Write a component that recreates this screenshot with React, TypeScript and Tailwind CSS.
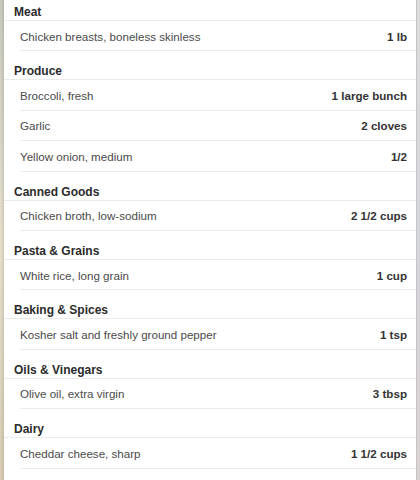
const sections = [
  { name: 'Meat', items: [['Chicken breasts, boneless skinless', '1 lb']] },
  {
    name: 'Produce',
    items: [
      ['Broccoli, fresh', '1 large bunch'],
      ['Garlic', '2 cloves'],
      ['Yellow onion, medium', '1/2'],
    ],
  },
  { name: 'Canned Goods', items: [['Chicken broth, low-sodium', '2 1/2 cups']] },
  { name: 'Pasta & Grains', items: [['White rice, long grain', '1 cup']] },
  { name: 'Baking & Spices', items: [['Kosher salt and freshly ground pepper', '1 tsp']] },
  { name: 'Oils & Vinegars', items: [['Olive oil, extra virgin', '3 tbsp']] },
  { name: 'Dairy', items: [['Cheddar cheese, sharp', '1 1/2 cups']] },
];

export default function App() {
  return (
    <div
      className="flex w-[420px] h-[480px] overflow-hidden bg-white"
      style={{ fontFamily: '"Liberation Sans", Arial, sans-serif' }}
    >
      {/* blurred photo peeking out on the left */}
      <div className="w-[4px] shrink-0 bg-gradient-to-b from-[#c9cbbf] via-[#e8e0cc] to-[#d9cdb4]" />

      <div className="flex-1 flex flex-col bg-white shadow-[-1px_0_3px_rgba(0,0,0,0.15)] text-[11.6px]">
        {sections.map((s, i) => (
          <div key={s.name}>
            <div
              className={`flex items-end pl-[10px] pb-0 border-b border-[#ebebeb] font-bold text-[12px] text-[#2b2b2b] leading-[15px] ${
                i === 0 ? 'h-[21px]' : 'h-[29px]'
              }`}
            >
              {s.name}
            </div>
            {s.items.map(([label, qty]) => (
              <div
                key={label}
                className="ml-[16px] h-[30.4px] pt-[1px] pr-[9px] flex items-center justify-between border-b border-[#ebebeb] leading-[15px]"
              >
                <span className="text-[#4a4a4a]">{label}</span>
                <span className="font-bold text-[#333333]">{qty}</span>
              </div>
            ))}
          </div>
        ))}
      </div>

      {/* edge of the page behind */}
      <div className="w-[4px] shrink-0 border-l border-[#c4c4c4] bg-gradient-to-b from-[#dcdcdc] via-[#d6d6de] to-[#dcd2d2]" />
    </div>
  );
}
